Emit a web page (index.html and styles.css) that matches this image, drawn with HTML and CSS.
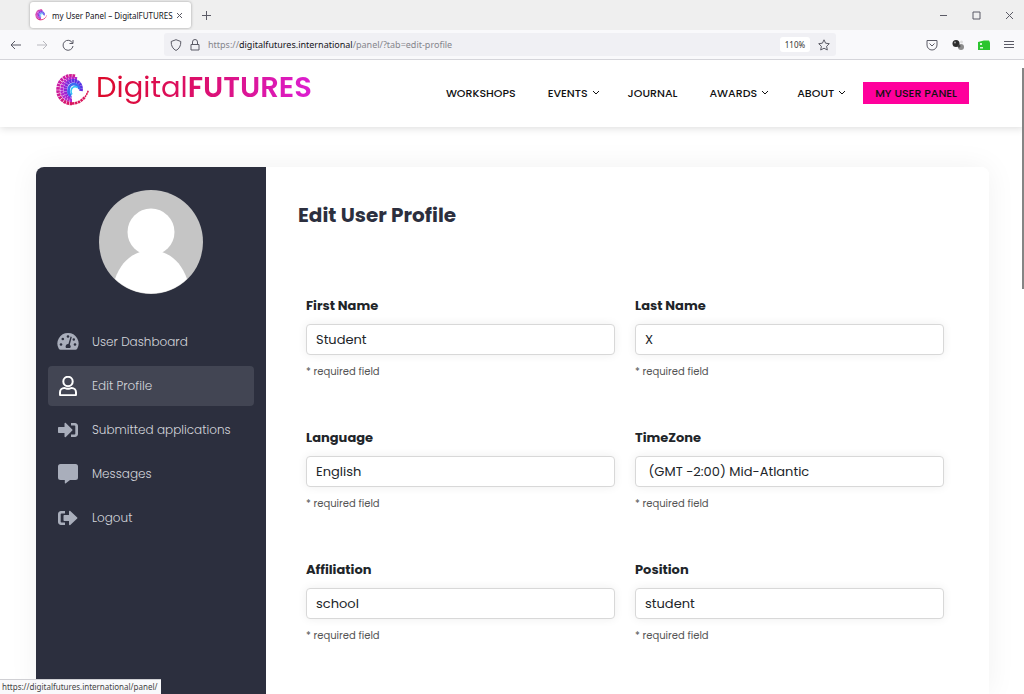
FILE: index.html
```
<!DOCTYPE html>
<html lang="en">
<head>
	<meta charset="UTF-8">
	<meta name="viewport" content="width=device-width, initial-scale=1.0">
	<title>my User Panel – DigitalFUTURES</title>
	<link rel="stylesheet" href="styles.css">
</head>
<body>
	<!-- Shared logo swirl -->
	<svg class="defs" width="0" height="0" aria-hidden="true">
		<defs>
			<linearGradient id="outer" x1="0" y1="0" x2="1" y2="1">
				<stop offset="0" stop-color="#c81fb4"/>
				<stop offset="1" stop-color="#dc1455"/>
			</linearGradient>
			<linearGradient id="inner" x1="0" y1="1" x2="1" y2="0">
				<stop offset="0" stop-color="#a51fd0"/>
				<stop offset="1" stop-color="#4b35e8"/>
			</linearGradient>
		</defs>
		<symbol id="swirl" viewBox="0 0 34 34">
			<g fill="none">
				<path d="M20 3.200C10 1 3 8 3 17c0 8 6 13.500 14 13.500" stroke="url(#outer)" stroke-width="3.600" stroke-dasharray="2.600 .6"/>
				<path d="M17 30.500c6 0 10-3 13-6.500" stroke="#d9175c" stroke-width="2.600" stroke-dasharray="2.400 .6"/>
				<path d="M30 24c1.500-2 2.500-4 3.300-6.500" stroke="#dc1450" stroke-width="1.500" stroke-dasharray="2 .5"/>
				<path d="M22 5.800C13 3.500 6.800 9 6.800 17c0 6 4.200 10.300 10.200 10.300" stroke="#b526cc" stroke-width="3.200" stroke-dasharray="2.400 .4"/>
				<path d="M26 18C27 10 21 7 17 8c-5 1-6.600 5-6.600 9 0 4 2 7 6 8" stroke="url(#inner)" stroke-width="3.600" stroke-dasharray="2.400 .3"/>
				<path d="M24.500 16C23.500 12 20 10.700 18 11.200c-3 .5-4.500 3.800-4.500 6.800 0 2 1 4 2.500 5" stroke="#3a6cf2" stroke-width="2.800"/>
				<path d="M22.500 14.500C20 12.500 16.300 14 16 18c0 1.500.3 2.500 1 3.500" stroke="#35c4f4" stroke-width="1.600"/>
			</g>
		</symbol>
	</svg>

	<!-- Tab strip -->
	<div class="tab-strip">
		<div class="tab">
			<svg class="favicon"><use href="#swirl"/></svg>
			<span class="tab-title">my User Panel – DigitalFUTURES</span>
			<button class="icon-btn" aria-label="Close tab"><svg width="7" height="7" viewBox="0 0 7 7"><path d="M1 1l5 5M6 1L1 6"/></svg></button>
		</div>
		<button class="icon-btn new-tab" aria-label="New tab"><svg width="9" height="9" viewBox="0 0 9 9"><path d="M4.500 0v9M0 4.500h9"/></svg></button>
		<div class="window-btns">
			<button class="icon-btn" aria-label="Minimize"><svg width="9" height="9" viewBox="0 0 9 9"><path d="M1 4.500h7"/></svg></button>
			<button class="icon-btn" aria-label="Maximize"><svg width="9" height="9" viewBox="0 0 9 9"><path d="M1 1h7v7H1z"/></svg></button>
			<button class="icon-btn" aria-label="Close"><svg width="9" height="9" viewBox="0 0 9 9"><path d="M1 1l7 7M8 1L1 8"/></svg></button>
		</div>
	</div>

	<!-- Address bar -->
	<div class="toolbar">
		<div class="history">
			<button class="icon-btn" aria-label="Back"><svg width="12" height="12" viewBox="0 0 12 12"><path d="M11 6H1M5 2L1 6l4 4"/></svg></button>
			<button class="icon-btn off" aria-label="Forward"><svg width="12" height="12" viewBox="0 0 12 12"><path d="M1 6h10M7 2l4 4-4 4"/></svg></button>
			<button class="icon-btn" aria-label="Reload"><svg width="12" height="12" viewBox="0 0 12 12"><path d="M10.500 4A5 5 0 1 0 11 7M11 1v3.500H7.500"/></svg></button>
		</div>
		<div class="url-bar">
			<svg width="12" height="12" viewBox="0 0 12 12"><path d="M6 .7l4.800 1.800C11 7 9 10 6 11.500 3 10 1 7 1.200 2.500z"/></svg>
			<svg width="10" height="12" viewBox="0 0 10 12"><path d="M1 5.500h8V11H1zM2.500 5.500V3a2.500 2.500 0 0 1 5 0v2.500"/></svg>
			<span class="url">https://<b>digitalfutures.international</b>/panel/?tab=edit-profile</span>
			<button class="zoom-level">110%</button>
			<button class="icon-btn" aria-label="Bookmark"><svg width="12" height="12" viewBox="0 0 12 12"><path d="M6 .8l1.600 3.400 3.700.5-2.700 2.600.7 3.700L6 9.200 2.700 11l.7-3.700L.7 4.700l3.700-.5z"/></svg></button>
		</div>
		<div class="extensions">
			<button class="icon-btn" aria-label="Save to Pocket"><svg width="12" height="12" viewBox="0 0 12 12"><path d="M1 1.500h10V6A5 5 0 0 1 1 6zM3.500 4.500L6 7l2.500-2.500"/></svg></button>
			<button class="icon-btn" aria-label="Extension"><svg class="solid" width="12" height="12" viewBox="0 0 12 12"><circle cx="9" cy="8" r="3" fill="#8b8b8b"/><circle cx="9.500" cy="3" r="1.500" fill="#ddd"/><circle cx="4" cy="4.500" r="3.500" fill="#2d2d2d"/><circle cx="3" cy="3.500" r="1" fill="#999"/><circle cx="7" cy="7" r="1.500" fill="#444"/></svg></button>
			<button class="icon-btn" aria-label="Extension"><svg class="solid" width="12" height="12" viewBox="0 0 12 12"><path d="M0 3l6-1.500h5l1 2V11H0z" fill="#2bc52e"/><path d="M2 4h2v2H2zM2 8h3v1.500H2z" fill="#d6f7d6"/></svg></button>
			<button class="icon-btn" aria-label="Menu"><svg width="10" height="12" viewBox="0 0 10 12"><path d="M0 2.500h10M0 5.500h10M0 8.500h10"/></svg></button>
		</div>
	</div>

	<!-- Page -->
	<div class="page">
		<header class="site-header">
			<a class="logo" href="#">
				<svg class="logo-mark"><use href="#swirl"/></svg>
				<span class="logo-text">Digital<b>FUTURES</b></span>
			</a>
			<nav class="site-nav">
				<a href="#">WORKSHOPS</a>
				<a href="#" class="has-menu">EVENTS <svg width="8" height="6" viewBox="0 0 8 6"><path d="M1 1l3 3 3-3"/></svg></a>
				<a href="#">JOURNAL</a>
				<a href="#" class="has-menu">AWARDS <svg width="8" height="6" viewBox="0 0 8 6"><path d="M1 1l3 3 3-3"/></svg></a>
				<a href="#" class="has-menu">ABOUT <svg width="8" height="6" viewBox="0 0 8 6"><path d="M1 1l3 3 3-3"/></svg></a>
				<a href="#" class="panel-link">MY USER PANEL</a>
			</nav>
		</header>

		<main class="panel">
			<aside class="sidebar">
				<svg class="avatar" viewBox="0 0 104 104">
					<circle cx="52" cy="52" r="52" fill="#c5c5c5"/>
					<circle cx="52" cy="42" r="23.500" fill="#fff"/>
					<path d="M16 89C21 74 31 65 41 62h22c10 3 20 12 25 27a52 52 0 0 1-72 0z" fill="#fff"/>
				</svg>
				<ul class="menu">
					<li><a href="#">
						<svg viewBox="0 0 22 20"><path d="M11 1a10.500 10.500 0 0 0-9.200 15.700c.4.700 1 1 1.700 1h15c.7 0 1.300-.3 1.700-1A10.500 10.500 0 0 0 11 1z"/><g class="cut"><circle cx="11" cy="4.500" r="1.300"/><circle cx="5.800" cy="7" r="1.300"/><circle cx="4" cy="12.500" r="1.300"/><circle cx="18" cy="12.500" r="1.300"/><circle cx="16.800" cy="7.500" r="1.200"/><path d="M13.600 4.600l1.200.4-2 7.500a2.600 2.600 0 0 1 .4 3.500H9a2.600 2.600 0 0 1 2.400-4z"/></g></svg>
						User Dashboard</a></li>
					<li><a href="#" class="active">
						<svg viewBox="0 0 22 20"><g class="line"><circle cx="11" cy="5.500" r="4.700"/><path d="M3 18.500v-2.200c0-2.400 2-4.300 4.300-4.300 1.200 0 1.900.8 3.700.8s2.500-.8 3.700-.8c2.300 0 4.300 1.900 4.300 4.300v2.200c0 .4-.3.700-.7.700H3.700c-.4 0-.7-.3-.7-.7z"/></g></svg>
						Edit Profile</a></li>
					<li><a href="#">
						<svg viewBox="0 0 22 20"><path d="M2 7h5.500V3.600c0-.7.800-1 1.300-.6l6.500 6.400c.4.400.4.800 0 1.200L8.800 17c-.5.500-1.300.1-1.300-.6V13H2c-.6 0-1-.4-1-1V8c0-.6.4-1 1-1z"/><path d="M14 3h4c1.600 0 3 1.400 3 3v8c0 1.600-1.400 3-3 3h-4v-2.500h3.500c.5 0 .8-.3.800-.8V6.300c0-.5-.3-.8-.8-.8H14z"/></svg>
						Submitted applications</a></li>
					<li><a href="#">
						<svg viewBox="0 0 22 20"><path d="M3.500 0h15A2.500 2.500 0 0 1 21 2.500v11a2.500 2.500 0 0 1-2.500 2.500H13l-4.500 3.400c-.3.200-.7 0-.7-.4v-3H3.500A2.500 2.500 0 0 1 1 13.500v-11A2.500 2.500 0 0 1 3.500 0z"/></svg>
						Messages</a></li>
					<li><a href="#">
						<svg viewBox="0 0 22 20"><path d="M7.500 7H12V3.600c0-.7.800-1 1.300-.6l6.900 6.400c.4.400.4.800 0 1.200L13.300 17c-.5.500-1.300.1-1.300-.6V13H7.500c-.6 0-1-.4-1-1V8c0-.6.4-1 1-1z"/><path d="M8 3H4C2.400 3 1 4.400 1 6v8c0 1.600 1.400 3 3 3h4v-2.500H4.500c-.5 0-.8-.3-.8-.8V6.300c0-.5.3-.8.8-.8H8z"/></svg>
						Logout</a></li>
				</ul>
			</aside>

			<section class="content">
				<h1>Edit User Profile</h1>
				<form class="profile-form">
					<div class="field">
						<label for="first-name">First Name</label>
						<input type="text" id="first-name" value="Student">
						<small>* required field</small>
					</div>
					<div class="field">
						<label for="last-name">Last Name</label>
						<input type="text" id="last-name" value="X">
						<small>* required field</small>
					</div>
					<div class="field">
						<label for="language">Language</label>
						<select id="language"><option>English</option></select>
						<small>* required field</small>
					</div>
					<div class="field">
						<label for="timezone">TimeZone</label>
						<select id="timezone"><option>&nbsp;(GMT -2:00) Mid-Atlantic</option></select>
						<small>* required field</small>
					</div>
					<div class="field">
						<label for="affiliation">Affiliation</label>
						<input type="text" id="affiliation" value="school">
						<small>* required field</small>
					</div>
					<div class="field">
						<label for="position">Position</label>
						<input type="text" id="position" value="student">
						<small>* required field</small>
					</div>
				</form>
			</section>
		</main>
		<div class="scroll-thumb"></div>
		<div class="status">https://digitalfutures.international/panel/</div>
	</div>
</body>
</html>
```
FILE: styles.css
```
* {
	margin: 0;
	padding: 0;
	box-sizing: border-box;
}

body {
	font-family: Poppins, Inter, sans-serif;
	display: flex;
	flex-direction: column;
	height: 100vh;
	background: #fff;
	color: #212529;
	overflow: hidden;
}

a {
	color: inherit;
	text-decoration: none;
}

.defs {
	position: absolute;
}

/* Browser bars */
.tab-strip,
.toolbar {
	display: flex;
	align-items: center;
	flex-shrink: 0;
	font-family: "Segoe UI", "Noto Sans", sans-serif;
}

.tab-strip {
	height: 30px;
	padding-left: 30px;
	background: #efefef;
}

.tab-strip svg,
.toolbar svg {
	fill: none;
	stroke: #5b5b66;
	flex-shrink: 0;
}

.toolbar svg.solid,
.tab-strip svg.favicon {
	stroke: none;
}

.icon-btn {
	display: flex;
	align-items: center;
	justify-content: center;
	background: none;
	border: none;
}

.icon-btn.off {
	opacity: 0.4;
}

.tab {
	display: flex;
	align-items: center;
	width: 161px;
	height: 26px;
	padding: 0 8px 0 5px;
	background: #fff;
	border-radius: 3px;
	box-shadow: 0 0 3px rgba(0, 0, 0, 0.35);
}

.favicon {
	width: 12px;
	height: 12px;
}

.tab-title {
	flex: 1;
	margin-left: 5px;
	font-size: 8px;
	color: #15141a;
	white-space: nowrap;
}

.new-tab {
	margin-left: 11px;
}

.window-btns {
	display: flex;
	gap: 24px;
	margin-left: auto;
	padding-right: 10px;
}

.toolbar {
	height: 30px;
	padding: 0 10px;
	background: #f9f9fb;
	border-bottom: 1px solid #d5d5da;
}

.history {
	display: flex;
	gap: 14px;
	width: 154px;
}

.url-bar {
	display: flex;
	align-items: center;
	gap: 8px;
	width: 672px;
	height: 23px;
	padding: 0 6px;
	background: #f0f0f4;
	border-radius: 3px;
	font-size: 9px;
}

.url {
	flex: 1;
	color: #85858c;
}

.url b {
	font-weight: 400;
	color: #15141a;
}

.zoom-level {
	width: 30px;
	height: 15px;
	background: #fff;
	border: none;
	border-radius: 3px;
	font: 8px "Segoe UI", "Noto Sans", sans-serif;
	color: #333;
}

.extensions {
	display: flex;
	gap: 14px;
	margin-left: auto;
}

/* Page */
.page {
	flex: 1;
	min-height: 0;
	display: flex;
	flex-direction: column;
	position: relative;
	overflow: hidden;
}

.site-header {
	display: flex;
	align-items: center;
	justify-content: space-between;
	flex-shrink: 0;
	height: 67px;
	padding: 0 55px 2px;
	background: #fff;
	box-shadow: 0 1px 8px rgba(0, 0, 0, 0.15);
}

.logo {
	display: flex;
	align-items: center;
	gap: 7px;
	padding-bottom: 6px;
}

.logo-mark {
	width: 34px;
	height: 34px;
}

.logo-text {
	padding-bottom: 6px;
	font-size: 29px;
	line-height: 40px;
	background: linear-gradient(90deg, #dc0a28, #dc1070 50%, #dc1ed2);
	-webkit-background-clip: text;
	background-clip: text;
	color: transparent;
}

.logo-text b {
	font-weight: 600;
}

.site-nav {
	display: flex;
	align-items: center;
	gap: 32px;
	font-size: 11px;
	font-weight: 500;
	line-height: 22px;
	color: #111;
}

.has-menu {
	display: flex;
	align-items: center;
	gap: 4px;
	margin-right: -4px;
}

.has-menu svg {
	fill: none;
	stroke: #111;
}

.panel-link {
	margin-left: -11px;
	padding: 0 12px;
	background: #ff009c;
}

/* User panel */
.panel {
	display: flex;
	flex: 1;
	min-height: 0;
	margin: 40px 35px 0 36px;
	border-radius: 8px 8px 0 0;
	box-shadow: 0 0 30px rgba(0, 0, 0, 0.06);
}

.sidebar {
	width: 230px;
	flex-shrink: 0;
	padding: 23px 12px;
	background: #2c2f3e;
	border-radius: 8px 0 0 0;
}

.avatar {
	display: block;
	width: 104px;
	height: 104px;
	margin: 0 auto 28px;
}

.menu {
	display: flex;
	flex-direction: column;
	gap: 4px;
	list-style: none;
}

.menu a {
	display: flex;
	align-items: center;
	gap: 13px;
	height: 40px;
	padding: 0 9px;
	border-radius: 4px;
	font-size: 12px;
	font-weight: 300;
	color: #d3d5db;
}

.menu a.active {
	background: #424553;
}

.menu svg {
	width: 22px;
	height: 20px;
	fill: #a9aebb;
}

.menu .cut {
	fill: #2c2f3e;
}

.menu .line {
	fill: none;
	stroke: #fff;
	stroke-width: 2;
}

.content {
	flex: 1;
	padding: 33px 45px 0 32px;
	background: #fff;
	border-radius: 0 8px 0 0;
}

.content h1 {
	font-size: 20px;
	font-weight: 700;
	line-height: 30px;
	color: #2c2f3e;
}

.profile-form {
	display: grid;
	grid-template-columns: 1fr 1fr;
	gap: 47px 20px;
	margin-top: 66px;
	padding-left: 8px;
}

.field {
	display: flex;
	flex-direction: column;
	gap: 8px;
}

.field label {
	font-size: 13px;
	font-weight: 700;
	line-height: 20px;
}

.field input,
.field select {
	width: 100%;
	height: 31px;
	padding: 0 9px;
	appearance: none;
	background: #fff;
	border: 1px solid #d8d8d8;
	border-radius: 4px;
	box-shadow: 0 0 10px rgba(0, 0, 0, 0.07);
	font-family: inherit;
	font-size: 13px;
	color: #212529;
}

.field small {
	font-size: 10px;
	line-height: 18px;
	color: #555;
}

/* Overlays */
.scroll-thumb {
	position: absolute;
	top: 8px;
	right: 0;
	width: 2px;
	height: 221px;
	background: #858585;
}

.status {
	position: absolute;
	bottom: 0;
	left: 0;
	padding: 0 4px 0 2px;
	background: #f9f9fb;
	border-top: 1px solid #d0d0d4;
	font-family: "Segoe UI", "Noto Sans", sans-serif;
	font-size: 8px;
	line-height: 14px;
	color: #444;
}
```
